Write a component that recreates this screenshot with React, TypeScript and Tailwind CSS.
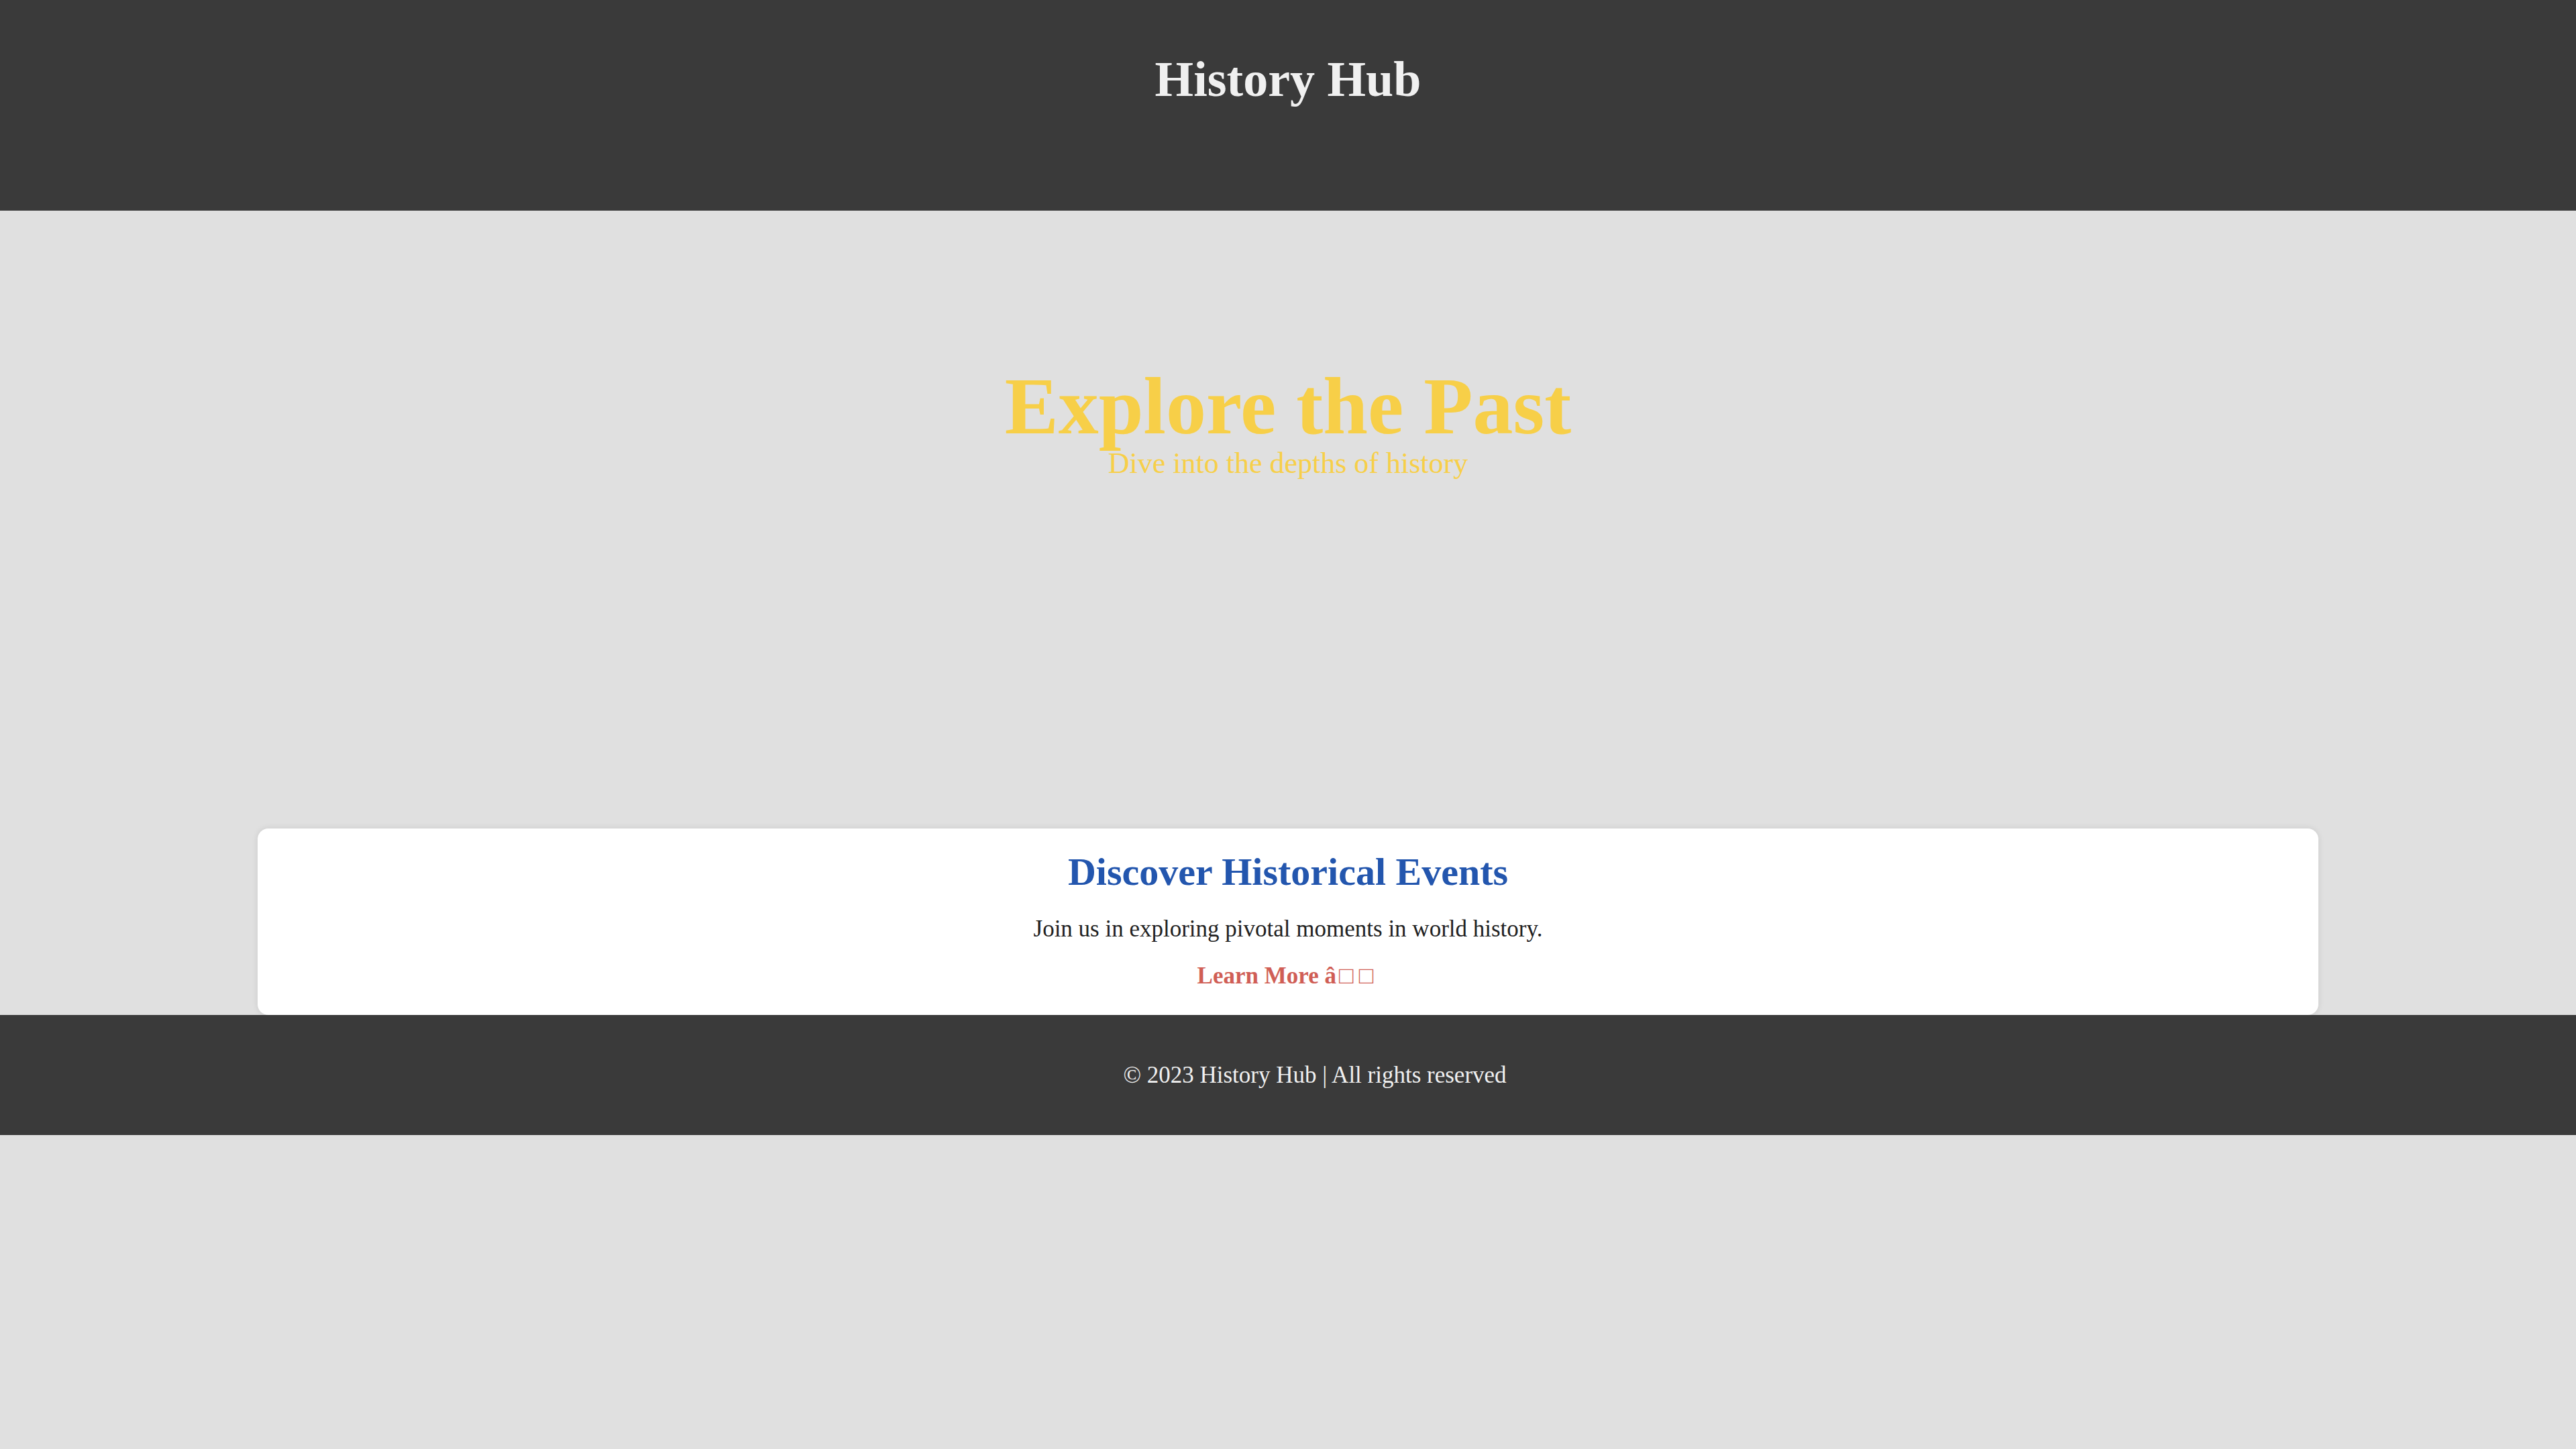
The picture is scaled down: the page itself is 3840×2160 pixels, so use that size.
const serif = { fontFamily: '"Liberation Serif", "DejaVu Serif", serif' }

export default function App() {
  return (
    <div className="min-h-screen bg-[#e0e0e0]" style={serif}>
      <header className="h-[314px] bg-[#3a3a3a] pt-[78px] text-center">
        <h1 className="text-[74px] leading-[80px] font-bold text-[#f0f0f0]">History Hub</h1>
      </header>

      <section className="h-[921px] pt-[232px] text-center">
        <h2 className="text-[120px] leading-[120px] font-bold text-[#f7cf48]">Explore the Past</h2>
        <p className="mt-[3px] text-[44px] leading-[44px] text-[#f7cf48]">Dive into the depths of history</p>
      </section>

      <main className="mx-auto w-[3072px] rounded-[16px] bg-white pt-[32px] pb-[36px] text-center shadow-[0_0_10px_rgba(0,0,0,0.1)]">
        <h3 className="text-[58px] leading-[66px] font-bold text-[#2356ae]">Discover Historical Events</h3>
        <p className="mt-[30px] text-[35px] leading-[44px] text-[#222222]">
          Join us in exploring pivotal moments in world history.
        </p>
        <a href="#" className="mt-[25px] block text-[35px] leading-[44px] font-bold text-[#d05e55]">
          Learn More â<span className="ml-[4px] text-[36px] font-normal tracking-[8px]">□□</span>
        </a>
      </main>

      <footer className="bg-[#3a3a3a] pt-[68px] pb-[67px] pl-[80px] text-center">
        <p className="text-[35px] leading-[44px] text-[#f0f0f0]">© 2023 History Hub | All rights reserved</p>
      </footer>
    </div>
  )
}
